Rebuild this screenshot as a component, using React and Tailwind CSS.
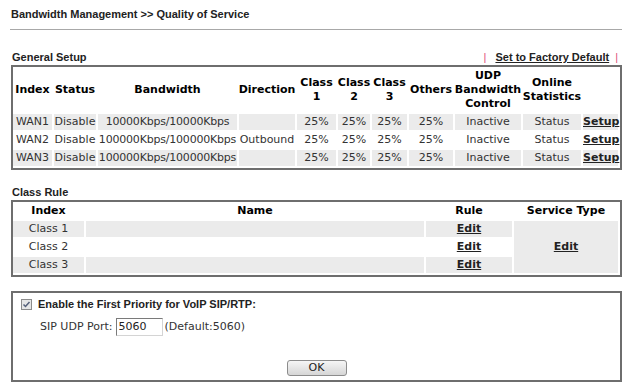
// Página de QoS: Bandwidth Management >> Quality of Service
const sans = { fontFamily: '"DejaVu Sans", Verdana, sans-serif' };
const arial = { fontFamily: '"Liberation Sans", Arial, sans-serif' };

const cols1 =
  'grid grid-cols-[39px_42px_139px_56px_39px_32px_35px_44px_66px_58px_35px] gap-[2px]';
const cols2 = 'grid grid-cols-[71px_338px_86px_104px] gap-[2px]';

const wans = [
  { name: 'WAN1', bw: '10000Kbps/10000Kbps', dir: '', gray: true },
  { name: 'WAN2', bw: '100000Kbps/100000Kbps', dir: 'Outbound', gray: false },
  { name: 'WAN3', bw: '100000Kbps/100000Kbps', dir: '', gray: true },
];

function Head({ children }) {
  return (
    <div className="flex items-center justify-center text-center font-bold text-black leading-[14px]">
      {children}
    </div>
  );
}

function Cell({ gray, children, className = '' }) {
  return (
    <div
      className={`h-[16px] leading-[16px] text-center whitespace-nowrap ${
        gray ? 'bg-[#ebebeb]' : ''
      } ${className}`}
    >
      {children}
    </div>
  );
}

function Link({ children }) {
  return <span className="font-bold underline text-[#222]">{children}</span>;
}

export default function App() {
  return (
    <div className="w-[640px] h-[390px] bg-white overflow-hidden text-[#333]">
      {/* Titulo */}
      <div className="h-[29px] pt-[7px] pl-[11px] text-[11px] leading-[14px] font-bold text-[#222]" style={arial}>
        Bandwidth Management &gt;&gt; Quality of Service
      </div>
      <div className="ml-[10px] w-[612px] h-px bg-[#a8a8a8]" />

      {/* General Setup */}
      <div className="ml-[11px] w-[611px] h-[35px] flex items-end justify-between pb-[1px] text-[11px] leading-[14px] font-bold text-[#222]" style={arial}>
        <span className="pl-[1px]">General Setup</span>
        <span className="flex items-center">
          <span className="font-normal text-[#e0507a]">|</span>
          <span className="ml-[9px] underline">Set to Factory Default</span>
          <span className="ml-[6px] mr-[4px] font-normal text-[#e0507a]">|</span>
        </span>
      </div>
      <div className="ml-[11px] w-[611px] border-2 border-[#6e6e6e] pb-[2px] text-[11px]" style={sans}>
        <div className={cols1}>
          <Head>Index</Head>
          <Head>Status</Head>
          <Head>Bandwidth</Head>
          <Head>Direction</Head>
          <Head>Class<br />1</Head>
          <Head>Class<br />2</Head>
          <Head>Class<br />3</Head>
          <Head>Others</Head>
          <div className="h-[45px] flex items-center justify-center text-center font-bold text-black leading-[14px]">
            UDP<br />Bandwidth<br />Control
          </div>
          <Head>Online<br />Statistics</Head>
          <div />
          {wans.map((w) => (
            <div key={w.name} className="contents">
              <Cell gray={w.gray}>{w.name}</Cell>
              <Cell gray={w.gray}>Disable</Cell>
              <Cell gray={w.gray} className="tracking-[-0.2px]">{w.bw}</Cell>
              <Cell gray={w.gray}>{w.dir}</Cell>
              <Cell gray={w.gray}>25%</Cell>
              <Cell gray={w.gray}>25%</Cell>
              <Cell gray={w.gray}>25%</Cell>
              <Cell gray={w.gray}>25%</Cell>
              <Cell gray={w.gray}>Inactive</Cell>
              <Cell gray={w.gray}>Status</Cell>
              <Cell gray={w.gray}><Link>Setup</Link></Cell>
            </div>
          ))}
        </div>
      </div>

      {/* Class Rule */}
      <div className="ml-[11px] h-[30px] flex items-end pb-[1px] pl-[1px] text-[11px] leading-[14px] font-bold text-[#222]" style={arial}>
        Class Rule
      </div>
      <div className="ml-[11px] w-[611px] border-2 border-[#6e6e6e] pb-[2px] text-[11px]" style={sans}>
        <div className={`${cols2} grid-rows-[17px_16px_16px_16px]`}>
          <Head>Index</Head>
          <Head>Name</Head>
          <Head>Rule</Head>
          <Head>Service Type</Head>
          <Cell gray>Class 1</Cell>
          <Cell gray />
          <Cell gray><Link>Edit</Link></Cell>
          <div className="row-span-3 bg-[#ebebeb] flex items-center justify-center">
            <Link>Edit</Link>
          </div>
          <Cell>Class 2</Cell>
          <Cell />
          <Cell><Link>Edit</Link></Cell>
          <Cell gray>Class 3</Cell>
          <Cell gray />
          <Cell gray><Link>Edit</Link></Cell>
        </div>
      </div>

      {/* VoIP */}
      <div className="ml-[11px] mt-[14px] w-[611px] border-2 border-[#6e6e6e] pt-[4px] pb-[4px] text-[11px]">
        <div className="flex items-center h-[14px] pl-[8px]">
          <span className="w-[11px] h-[11px] border border-[#8c8c8c] bg-[#e6e6e6] flex items-center justify-center">
            <svg width="9" height="9" viewBox="0 0 9 9">
              <path d="M1.5 4.5 L3.5 6.5 L7.5 2" fill="none" stroke="#55607a" strokeWidth="1.5" />
            </svg>
          </span>
          <span className="ml-[6px] font-bold text-[#222]" style={arial}>
            Enable the First Priority for VoIP SIP/RTP:
          </span>
        </div>
        <div className="mt-[7px] flex items-center h-[18px] pl-[27px]" style={sans}>
          <span>SIP UDP Port:</span>
          <span className="ml-[3px] w-[47px] h-[18px] border border-t-[#7a7a7a] border-l-[#7a7a7a] border-r-[#d4d4d4] border-b-[#d4d4d4] bg-white leading-[16px] pl-[2px] text-[#222]">
            5060
          </span>
          <span className="ml-[2px]">(Default:5060)</span>
        </div>
        <div className="mt-[24px] flex justify-center">
          <button
            className="w-[60px] h-[16px] rounded-[3px] border border-[#8c8c8c] bg-gradient-to-b from-[#f6f6f6] to-[#d6d6d6] text-[11px] leading-[14px] text-[#222]"
            style={sans}
          >
            OK
          </button>
        </div>
      </div>
    </div>
  );
}
